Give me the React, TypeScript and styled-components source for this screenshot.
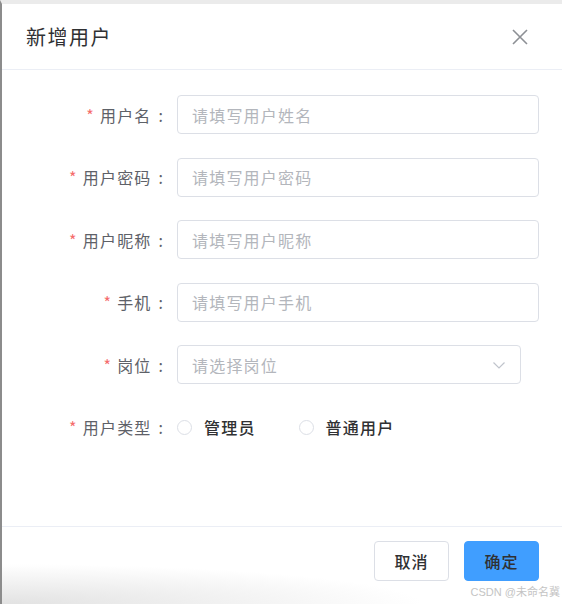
import styled, { createGlobalStyle } from "styled-components";

const GlobalStyle = createGlobalStyle`
  html, body {
    margin: 0;
    padding: 0;
    background: #ffffff;
  }
  body {
    font-family: "Noto Sans CJK SC", "Noto Sans", sans-serif;
  }
`;

const Dialog = styled.div`
  position: relative;
  width: 562px;
  height: 604px;
  box-sizing: border-box;
  border-top: 4px solid #ebebeb;
  border-left: 2px solid #8c8c8c;
  background: radial-gradient(
      ellipse 420px 40px at 0% 100%,
      #e2e2e2 0%,
      rgba(255, 255, 255, 0) 100%
    ),
    #ffffff;
  overflow: hidden;
`;

const Header = styled.div`
  height: 65px;
  display: flex;
  align-items: center;
  justify-content: space-between;
  padding: 0 33px 0 24px;
  border-bottom: 1px solid #ebeef5;
`;

const Title = styled.div`
  font-size: 20px;
  letter-spacing: 1.5px;
  color: #303133;
  line-height: 24px;
`;

const Close = styled.svg`
  width: 18px;
  height: 18px;
`;

const Body = styled.div`
  height: 431.5px;
  padding-top: 24.5px;
`;

const Row = styled.div`
  display: grid;
  grid-template-columns: 161px 1fr;
  column-gap: 14px;
  align-items: center;
  height: 40px;
  margin-bottom: 22.5px;
`;

const Label = styled.label`
  text-align: right;
  font-size: 16px;
  letter-spacing: 1.2px;
  color: #5e6168;
  white-space: nowrap;
`;

const Star = styled.span`
  color: #f56c6c;
  margin-right: 5px;
`;

const Colon = styled.span`
  margin-left: 7px;
  letter-spacing: 0;
`;

const Input = styled.div<{ $width: number }>`
  box-sizing: border-box;
  width: ${(p) => p.$width}px;
  height: 39px;
  border: 1px solid #dcdfe6;
  border-radius: 4px;
  display: flex;
  align-items: center;
  justify-content: space-between;
  padding: 0 14px 0 14px;
  font-size: 16px;
  letter-spacing: 1.2px;
  color: #b3b6bc;
`;

const Arrow = styled.svg`
  width: 14px;
  height: 14px;
`;

const Radios = styled.div`
  display: flex;
  align-items: center;
`;

const Radio = styled.div`
  display: flex;
  align-items: center;
  margin-right: 43px;
`;

const Circle = styled.span`
  box-sizing: border-box;
  width: 15px;
  height: 15px;
  border: 1px solid #dcdfe6;
  border-radius: 50%;
  margin-right: 12px;
`;

const RadioText = styled.span`
  font-size: 16px;
  letter-spacing: 1.2px;
  font-weight: 500;
  color: #303133;
`;

const Footer = styled.div`
  border-top: 1px solid #ebeef5;
  display: flex;
  justify-content: flex-end;
  gap: 15px;
  padding: 14px 23px 0 0;
`;

const Button = styled.button<{ $primary?: boolean }>`
  box-sizing: border-box;
  width: 75px;
  height: 40px;
  border-radius: 4px;
  border: 1px solid ${(p) => (p.$primary ? "#409eff" : "#dcdfe6")};
  background: ${(p) => (p.$primary ? "#409eff" : "#ffffff")};
  color: #303133;
  font-family: "Noto Sans CJK SC", sans-serif;
  font-size: 16px;
  letter-spacing: 1px;
  font-weight: 500;
`;

const Watermark = styled.div`
  position: absolute;
  right: 2px;
  bottom: 5px;
  font-size: 11px;
  color: #c4c4c4;
  font-family: "Liberation Sans", "Noto Sans CJK SC", sans-serif;
`;

const fields = [
  { label: "用户名", placeholder: "请填写用户姓名" },
  { label: "用户密码", placeholder: "请填写用户密码" },
  { label: "用户昵称", placeholder: "请填写用户昵称" },
  { label: "手机", placeholder: "请填写用户手机" },
];

export default function App() {
  return (
    <>
      <GlobalStyle />
      <Dialog>
        <Header>
          <Title>新增用户</Title>
          <Close viewBox="0 0 18 18">
            <path
              d="M2 2 L16 16 M16 2 L2 16"
              stroke="#8d9095"
              strokeWidth="1.6"
              fill="none"
            />
          </Close>
        </Header>
        <Body>
          {fields.map((f) => (
            <Row key={f.label}>
              <Label>
                <Star>*</Star>
                {f.label}
                <Colon>:</Colon>
              </Label>
              <Input $width={362}>{f.placeholder}</Input>
            </Row>
          ))}
          <Row>
            <Label>
              <Star>*</Star>
              岗位
              <Colon>:</Colon>
            </Label>
            <Input $width={344}>
              请选择岗位
              <Arrow viewBox="0 0 14 14">
                <path
                  d="M1.5 4.5 L7 10 L12.5 4.5"
                  stroke="#c0c4cc"
                  strokeWidth="1.2"
                  fill="none"
                />
              </Arrow>
            </Input>
          </Row>
          <Row>
            <Label>
              <Star>*</Star>
              用户类型
              <Colon>:</Colon>
            </Label>
            <Radios>
              <Radio>
                <Circle />
                <RadioText>管理员</RadioText>
              </Radio>
              <Radio>
                <Circle />
                <RadioText>普通用户</RadioText>
              </Radio>
            </Radios>
          </Row>
        </Body>
        <Footer>
          <Button>取消</Button>
          <Button $primary>确定</Button>
        </Footer>
        <Watermark>CSDN @未命名冀</Watermark>
      </Dialog>
    </>
  );
}
